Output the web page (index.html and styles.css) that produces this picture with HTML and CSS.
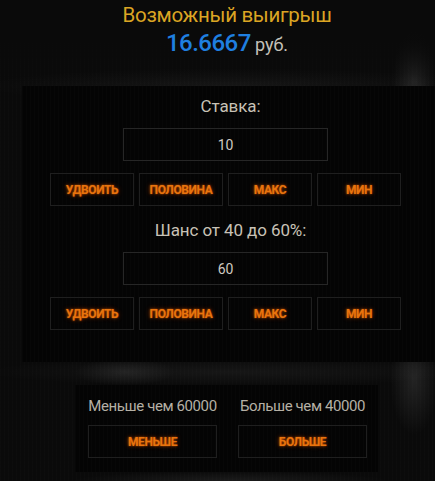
FILE: index.html
```html
<!DOCTYPE html>
<html lang="ru">
<head>
<meta charset="utf-8">
<title>Ставка</title>
<link rel="stylesheet" href="styles.css">
</head>
<body>
<div class="page">
  <header class="win">
    <div class="win-title">Возможный выигрыш</div>
    <div class="win-amount"><span class="win-num">16.6667</span> <span class="win-cur">руб.</span></div>
  </header>

  <section class="panel bet-panel">
    <div class="field-label">Ставка:</div>
    <div class="field-input">10</div>
    <div class="btn-row">
      <button class="btn">УДВОИТЬ</button>
      <button class="btn">ПОЛОВИНА</button>
      <button class="btn">МАКС</button>
      <button class="btn">МИН</button>
    </div>

    <div class="field-label field-label-2">Шанс от 40 до 60%:</div>
    <div class="field-input">60</div>
    <div class="btn-row">
      <button class="btn">УДВОИТЬ</button>
      <button class="btn">ПОЛОВИНА</button>
      <button class="btn">МАКС</button>
      <button class="btn">МИН</button>
    </div>
  </section>

  <section class="panel play-panel">
    <div class="play-label">Меньше чем 60000</div>
    <div class="play-label">Больше чем 40000</div>
    <button class="btn btn-wide">МЕНЬШЕ</button>
    <button class="btn btn-wide">БОЛЬШЕ</button>
  </section>
</div>
</body>
</html>
```

FILE: styles.css
```css
html, body {
  margin: 0;
  padding: 0;
}

body {
  width: 435px;
  height: 481px;
  overflow: hidden;
  font-family: Roboto, "Noto Sans", sans-serif;
  background-color: #0a0a0a;
  background-image:
    linear-gradient(180deg, rgba(10,10,10,1) 0px, rgba(10,10,10,0.9) 40px, rgba(10,10,10,0) 86px),
    radial-gradient(ellipse 22px 50px at 414px 80px, rgba(255,255,255,0.10), rgba(255,255,255,0) 100%),
    radial-gradient(ellipse 250px 18px at 230px 86px, rgba(255,255,255,0.05), rgba(255,255,255,0) 100%),
    radial-gradient(ellipse 24px 55px at 414px 380px, rgba(255,255,255,0.10), rgba(255,255,255,0) 100%),
    radial-gradient(ellipse 50px 14px at 125px 372px, rgba(255,255,255,0.08), rgba(255,255,255,0) 100%),
    radial-gradient(ellipse 250px 14px at 230px 372px, rgba(255,255,255,0.05), rgba(255,255,255,0) 100%),
    radial-gradient(ellipse 160px 10px at 230px 481px, rgba(255,255,255,0.07), rgba(255,255,255,0) 100%),
    repeating-linear-gradient(90deg, rgba(255,255,255,0.012) 0 1px, rgba(255,255,255,0) 1px 4px);
}

.page {
  display: flex;
  flex-direction: column;
}

.win {
  padding: 3px 0 0 19px;
  height: 84px;
  box-sizing: border-box;
  text-align: center;
}

.win-title {
  color: #dba523;
  font-size: 20.5px;
  line-height: 25px;
  letter-spacing: -0.3px;
}

.win-amount {
  line-height: 30px;
}

.win-num {
  color: #1f7fe0;
  font-size: 24px;
  font-weight: 500;
  letter-spacing: -0.5px;
}

.win-cur {
  color: #c4c0b8;
  font-size: 18px;
}

.panel {
  background-color: #040404;
  background-image: repeating-linear-gradient(90deg, rgba(255,255,255,0.01) 0 1px, rgba(255,255,255,0) 1px 4px);
  box-sizing: border-box;
}

.bet-panel {
  margin: 2px 0 0 22px;
  width: 413px;
  height: 276px;
  padding: 9px 0 0 0;
  display: flex;
  flex-direction: column;
  align-items: center;
}

.field-label {
  color: #c8c2b6;
  font-size: 17px;
  line-height: 22px;
  letter-spacing: -0.1px;
  padding-left: 4px;
}

.field-label-2 {
  margin-top: 13px;
}

.field-input {
  margin-top: 11px;
  width: 205px;
  height: 33px;
  box-sizing: border-box;
  border: 1px solid #262626;
  color: #cfcac0;
  font-size: 14px;
  display: flex;
  align-items: center;
  justify-content: center;
  margin-left: -6px;
}

.btn-row {
  margin-top: 12px;
  display: flex;
  gap: 5px;
  margin-left: -6px;
}

.btn {
  width: 84px;
  height: 33px;
  box-sizing: border-box;
  background: transparent;
  border: 1px solid #1f1f1f;
  padding: 0;
  margin: 0;
  font-family: Roboto, "Noto Sans", sans-serif;
  font-weight: 700;
  font-size: 12px;
  letter-spacing: -0.4px;
  color: #e8740e;
  text-shadow: 0 0 2px rgba(255, 110, 0, 0.7), 0 0 5px rgba(255, 90, 0, 0.45);
  cursor: pointer;
}

.play-panel {
  margin: 23px 0 0 75px;
  width: 303px;
  height: 87px;
  padding: 12px 10px 0 13px;
  display: grid;
  grid-template-columns: 129px 129px;
  column-gap: 21px;
  row-gap: 9px;
  align-content: start;
}

.play-label {
  color: #b5b0a5;
  font-size: 15px;
  line-height: 19px;
  letter-spacing: -0.4px;
  white-space: nowrap;
  text-align: center;
}

.btn-wide {
  width: 129px;
  height: 33px;
}
```
